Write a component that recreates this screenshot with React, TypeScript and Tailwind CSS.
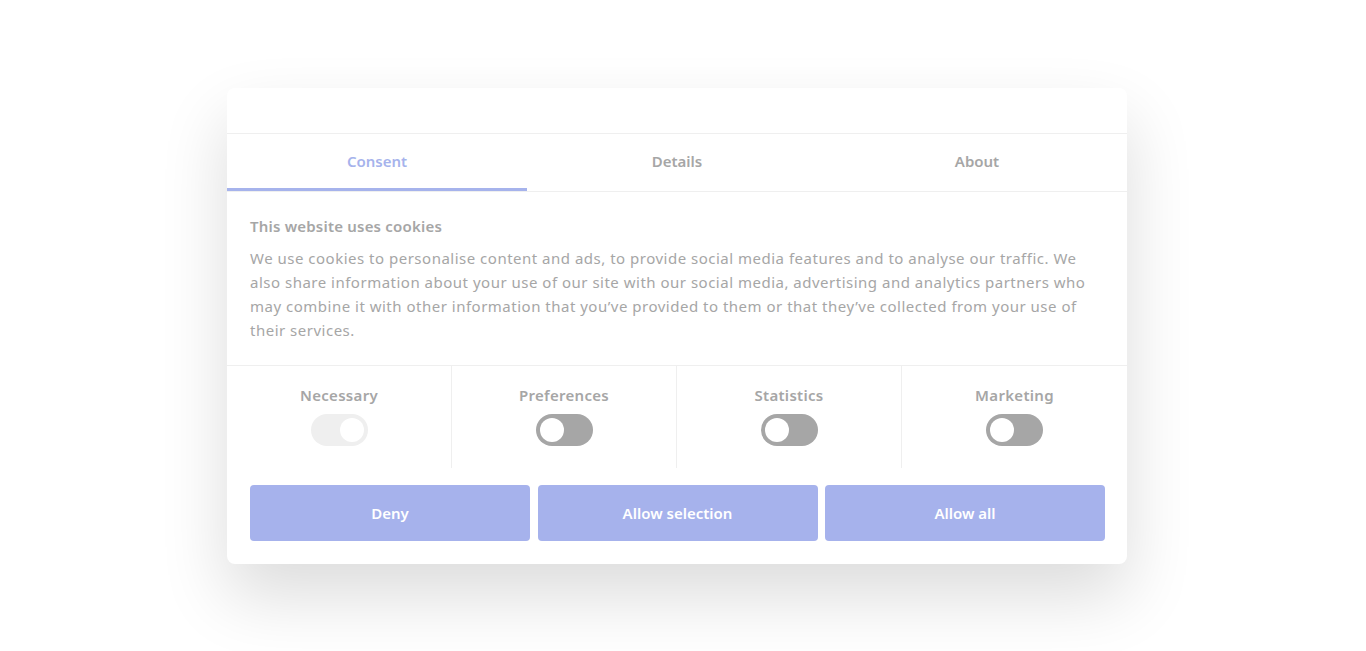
const tabs = ['Consent', 'Details', 'About'];

const toggles = [
  { label: 'Necessary', on: true, disabled: true },
  { label: 'Preferences', on: false },
  { label: 'Statistics', on: false },
  { label: 'Marketing', on: false },
];

function Toggle({ on, disabled }: { on: boolean; disabled?: boolean }) {
  return (
    <div
      className={`flex h-[32px] w-[57px] items-center rounded-full px-[4px] ${
        disabled ? 'bg-[#efefef]' : 'bg-[#a6a6a6]'
      } ${on ? 'justify-end' : 'justify-start'}`}
    >
      <div className="h-[24px] w-[24px] rounded-full bg-white" />
    </div>
  );
}

export default function App() {
  return (
    <div
      className="flex min-h-[651px] w-full justify-center bg-white pr-[12px] pt-[88px]"
      style={{ fontFamily: '"Noto Sans", "Open Sans", sans-serif' }}
    >
      <div className="h-[476px] w-[900px] rounded-lg bg-white shadow-[0_32px_68px_rgba(0,0,0,0.14)]">
        <div className="h-[46px] border-b border-[#efefef]" />

        <div className="flex border-b border-[#efefef]">
          {tabs.map((t, i) => (
            <div
              key={t}
              className={`flex h-[57px] flex-1 items-center justify-center border-b-[3px] pt-[1px] text-[15px] font-semibold ${
                i === 0 ? 'border-[#a6b3ec] text-[#a6b3ec]' : 'border-transparent text-[#a6a6a6]'
              }`}
            >
              {t}
            </div>
          ))}
        </div>

        <div className="border-b border-[#efefef] px-[23px] pb-[23px] pt-[24px] text-[#a6a6a6]">
          <h2 className="text-[15px] font-semibold leading-[20px] tracking-[0.2px]">This website uses cookies</h2>
          <p className="mt-[10px] text-[15px] leading-[24px] tracking-[0.5px]">
            We use cookies to personalise content and ads, to provide social media features and to analyse our traffic. We
            also share information about your use of our site with our social media, advertising and analytics partners who
            may combine it with other information that you’ve provided to them or that they’ve collected from your use of
            their services.
          </p>
        </div>

        <div className="grid grid-cols-4">
          {toggles.map((t, i) => (
            <div
              key={t.label}
              className={`flex h-[102px] flex-col items-center pt-[19px] ${
                i < 3 ? 'border-r border-[#efefef]' : ''
              }`}
            >
              <span className="text-[15px] font-semibold leading-[20px] tracking-[0.3px] text-[#a6a6a6]">
                {t.label}
              </span>
              <div className="mt-[9px]">
                <Toggle on={t.on} disabled={t.disabled} />
              </div>
            </div>
          ))}
        </div>

        <div className="grid grid-cols-3 gap-[7.5px] pl-[23px] pr-[22px] pt-[17px]">
          {['Deny', 'Allow selection', 'Allow all'].map((b) => (
            <button
              key={b}
              className="h-[56px] rounded-[4px] bg-[#a6b2ec] text-[15px] font-semibold text-white"
            >
              {b}
            </button>
          ))}
        </div>
      </div>
    </div>
  );
}
